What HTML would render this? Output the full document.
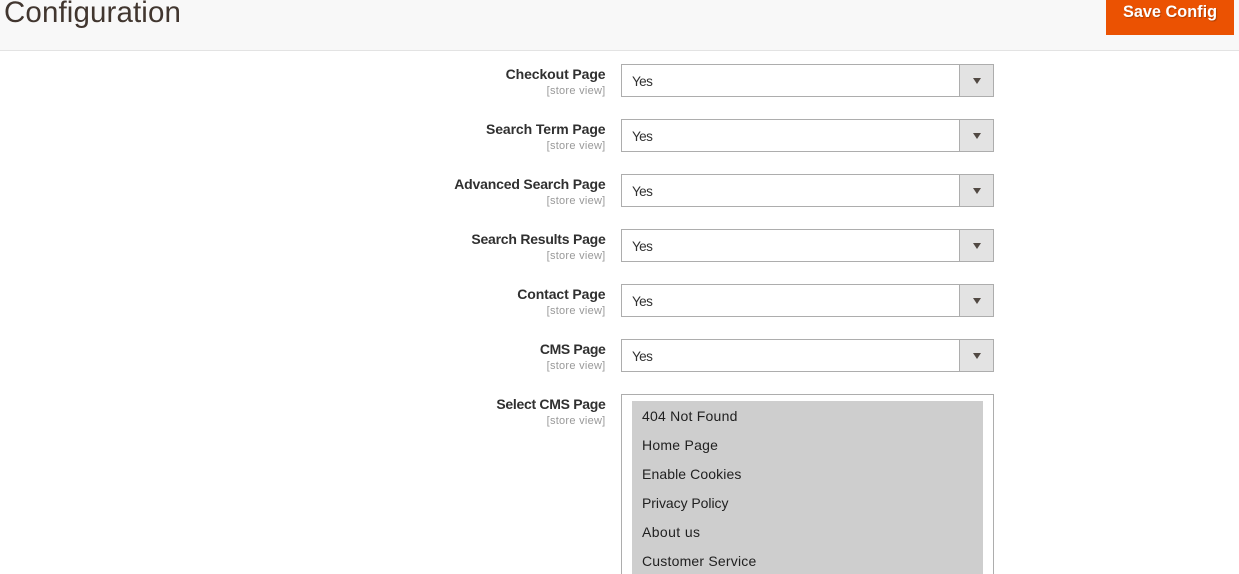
<!DOCTYPE html>
<html><head><meta charset="utf-8"><style>
html,body{margin:0;padding:0;width:1239px;height:574px;overflow:hidden;background:#fff;font-family:"Liberation Sans",sans-serif;color:#303030}
div{position:absolute;box-sizing:border-box;white-space:nowrap}
.page{left:0;top:0;width:1239px;height:574px;overflow:hidden}
.head{left:0;top:0;width:1239px;height:51px;background:#f8f8f8;border-bottom:1px solid #e3e3e3}
.title{left:4px;top:-6px;font-size:29.5px;line-height:38px;color:#41362f;letter-spacing:.12px}
.btn{left:1106px;top:0;width:128px;height:35px;background:#eb5202;color:#fff;font-size:16.3px;font-weight:bold;line-height:24px;text-align:center;text-shadow:1px 1px 1px rgba(0,0,0,.25)}
.lab{right:633.5px;font-size:14px;font-weight:bold;line-height:18px;color:#303030;letter-spacing:-.1px}
.sv{right:633.5px;font-size:11px;line-height:14px;color:#999;letter-spacing:.27px}
.sel{left:621px;width:373px;height:33px;border:1px solid #adadad;background:#fff}
.val{left:10px;top:8px;font-size:13.5px;line-height:18px;color:#303030;letter-spacing:-.6px}
.add{right:0;top:0;width:34px;height:31px;background:#e3e3e3;border-left:1px solid #adadad}
.arr{left:13px;top:13px;width:0;height:0;border-left:4.5px solid transparent;border-right:4.5px solid transparent;border-top:6px solid #514943}
.multi{left:621px;top:394px;width:373px;height:190px;border:1px solid #adadad;background:#fff}
.opts{left:10px;top:6px;width:351px;height:173px;background:#cecece}
.o{left:10px;font-size:14px;line-height:18px;color:#1f1f1f}
</style></head><body>
<div class="page">
<div class="head"></div>
<div class="title">Configuration</div>
<div class="btn">Save Config</div>

<div class="lab" style="top:65px">Checkout Page</div><div class="sv" style="top:84px">[store view]</div>
<div class="sel" style="top:64px"><div class="val">Yes</div><div class="add"><div class="arr"></div></div></div>

<div class="lab" style="top:120px">Search Term Page</div><div class="sv" style="top:139px">[store view]</div>
<div class="sel" style="top:119px"><div class="val">Yes</div><div class="add"><div class="arr"></div></div></div>

<div class="lab" style="top:175px;letter-spacing:-.18px">Advanced Search Page</div><div class="sv" style="top:194px">[store view]</div>
<div class="sel" style="top:174px"><div class="val">Yes</div><div class="add"><div class="arr"></div></div></div>

<div class="lab" style="top:230px;letter-spacing:-.23px">Search Results Page</div><div class="sv" style="top:249px">[store view]</div>
<div class="sel" style="top:229px"><div class="val">Yes</div><div class="add"><div class="arr"></div></div></div>

<div class="lab" style="top:285px">Contact Page</div><div class="sv" style="top:304px">[store view]</div>
<div class="sel" style="top:284px"><div class="val">Yes</div><div class="add"><div class="arr"></div></div></div>

<div class="lab" style="top:340px;letter-spacing:-.35px">CMS Page</div><div class="sv" style="top:359px">[store view]</div>
<div class="sel" style="top:339px"><div class="val">Yes</div><div class="add"><div class="arr"></div></div></div>

<div class="lab" style="top:395px;letter-spacing:-.3px">Select CMS Page</div><div class="sv" style="top:414px">[store view]</div>
<div class="multi"><div class="opts">
<div class="o" style="top:6px;letter-spacing:.23px">404 Not Found</div>
<div class="o" style="top:35px;letter-spacing:.25px">Home Page</div>
<div class="o" style="top:64px;letter-spacing:.1px">Enable Cookies</div>
<div class="o" style="top:93px;letter-spacing:-.05px">Privacy Policy</div>
<div class="o" style="top:122px;letter-spacing:.4px">About us</div>
<div class="o" style="top:151px;letter-spacing:.2px">Customer Service</div>
</div></div>
</div>
</body></html>
